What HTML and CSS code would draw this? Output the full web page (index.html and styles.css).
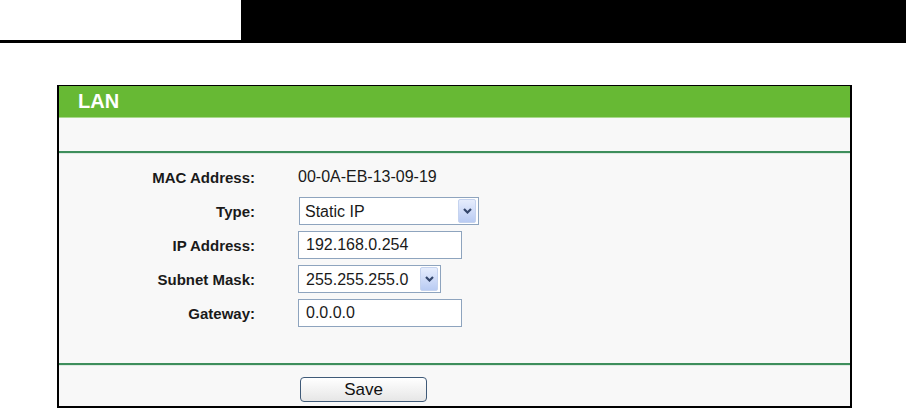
FILE: index.html
```html
<!DOCTYPE html>
<html lang="en">
<head>
    <meta charset="UTF-8">
    <meta name="viewport" content="width=device-width, initial-scale=1.0">
    <title>LAN</title>
    <link rel="stylesheet" href="styles.css">
</head>
<body>
    <div class="topbar">
        <div class="topbar-blank"></div>
        <div class="topbar-fill"></div>
    </div>

    <div class="panel">
        <div class="panel-title">LAN</div>
        <div class="panel-note"></div>
        <div class="divider"></div>

        <form class="panel-body" id="lan-form">
            <div class="field">
                <span class="field-label">MAC Address:</span>
                <span class="field-value">00-0A-EB-13-09-19</span>
            </div>
            <div class="field">
                <label class="field-label" for="lan-type">Type:</label>
                <div class="select select-type">
                    <select id="lan-type">
                        <option>Static IP</option>
                        <option>Dynamic IP</option>
                    </select>
                    <span class="select-arrow">
                        <svg width="9" height="6" viewBox="0 0 9 6"><path d="M1 1 L4.5 4.5 L8 1" fill="none" stroke="#34466b" stroke-width="2.2"/></svg>
                    </span>
                </div>
            </div>
            <div class="field">
                <label class="field-label" for="lan-ip">IP Address:</label>
                <input class="text-input" id="lan-ip" type="text" value="192.168.0.254">
            </div>
            <div class="field">
                <label class="field-label" for="lan-mask">Subnet Mask:</label>
                <div class="select select-mask">
                    <select id="lan-mask">
                        <option>255.255.255.0</option>
                        <option>255.255.0.0</option>
                        <option>255.0.0.0</option>
                    </select>
                    <span class="select-arrow">
                        <svg width="9" height="6" viewBox="0 0 9 6"><path d="M1 1 L4.5 4.5 L8 1" fill="none" stroke="#34466b" stroke-width="2.2"/></svg>
                    </span>
                </div>
            </div>
            <div class="field">
                <label class="field-label" for="lan-gw">Gateway:</label>
                <input class="text-input" id="lan-gw" type="text" value="0.0.0.0">
            </div>
        </form>

        <div class="divider"></div>
        <div class="panel-footer">
            <button class="btn-save" type="submit" form="lan-form">Save</button>
        </div>
    </div>
</body>
</html>
```

FILE: styles.css
```css
* {
    box-sizing: border-box;
    margin: 0;
    padding: 0;
}

body {
    font-family: "Liberation Sans", Arial, sans-serif;
    color: #1a1a1a;
    background-color: #fff;
}

.topbar {
    display: flex;
    height: 43px;
}
.topbar-blank {
    width: 241px;
    border-bottom: 3px solid #000;
}
.topbar-fill {
    flex: 1;
    background-color: #000;
}

.panel {
    width: 795px;
    margin: 42px 0 0 57px;
    border: 2px solid #000;
    border-top-width: 1px;
    background-color: #f8f8f8;
}
.panel-title {
    height: 32px;
    padding-left: 19px;
    background-color: #67b934;
    border-bottom: 1px solid #a8d98b;
    color: #fff;
    font-size: 20px;
    font-weight: bold;
    line-height: 30px;
}
.panel-note {
    height: 33px;
}
.divider {
    border-top: 2px solid #3e8e5c;
    border-bottom: 1px solid #dfeae3;
}

.panel-body {
    padding: 6px 0 33px;
}
.field {
    display: flex;
    align-items: center;
    height: 34px;
}
.field-label {
    width: 196px;
    margin-right: 43px;
    text-align: right;
    font-size: 15px;
    font-weight: bold;
}
.field-value {
    font-size: 16px;
}

.text-input {
    width: 164px;
    height: 28px;
    padding: 0 7px;
    border: 1px solid #8ea4be;
    background-color: #fff;
    font-family: inherit;
    font-size: 16px;
    color: #1a1a1a;
}

.select {
    display: flex;
    align-items: center;
    height: 28px;
    border: 1px solid #8ea4be;
    background-color: #fff;
}
.select select {
    flex: 1;
    min-width: 0;
    height: 100%;
    padding-left: 5px;
    border: none;
    background: transparent;
    appearance: none;
    -webkit-appearance: none;
    font-family: inherit;
    font-size: 16px;
    color: #1a1a1a;
    outline: none;
}
.select-type {
    width: 180px;
    margin-left: 1px;
}
.select-mask {
    width: 143px;
}
.select-mask select {
    padding-left: 7px;
}
.select-arrow {
    display: flex;
    align-items: center;
    justify-content: center;
    width: 18px;
    height: 24px;
    margin-right: 2px;
    border: 1px solid #c5d3ef;
    border-radius: 2px;
    background: linear-gradient(#e6edfd, #b9cbf3);
}

.panel-footer {
    height: 40px;
    padding: 11px 0 0 241px;
}
.btn-save {
    width: 127px;
    height: 25px;
    border: 1px solid #3f5a78;
    border-radius: 4px;
    background: linear-gradient(#ffffff, #e6e6e6);
    font-family: inherit;
    font-size: 17px;
    color: #111;
    cursor: pointer;
}
```
